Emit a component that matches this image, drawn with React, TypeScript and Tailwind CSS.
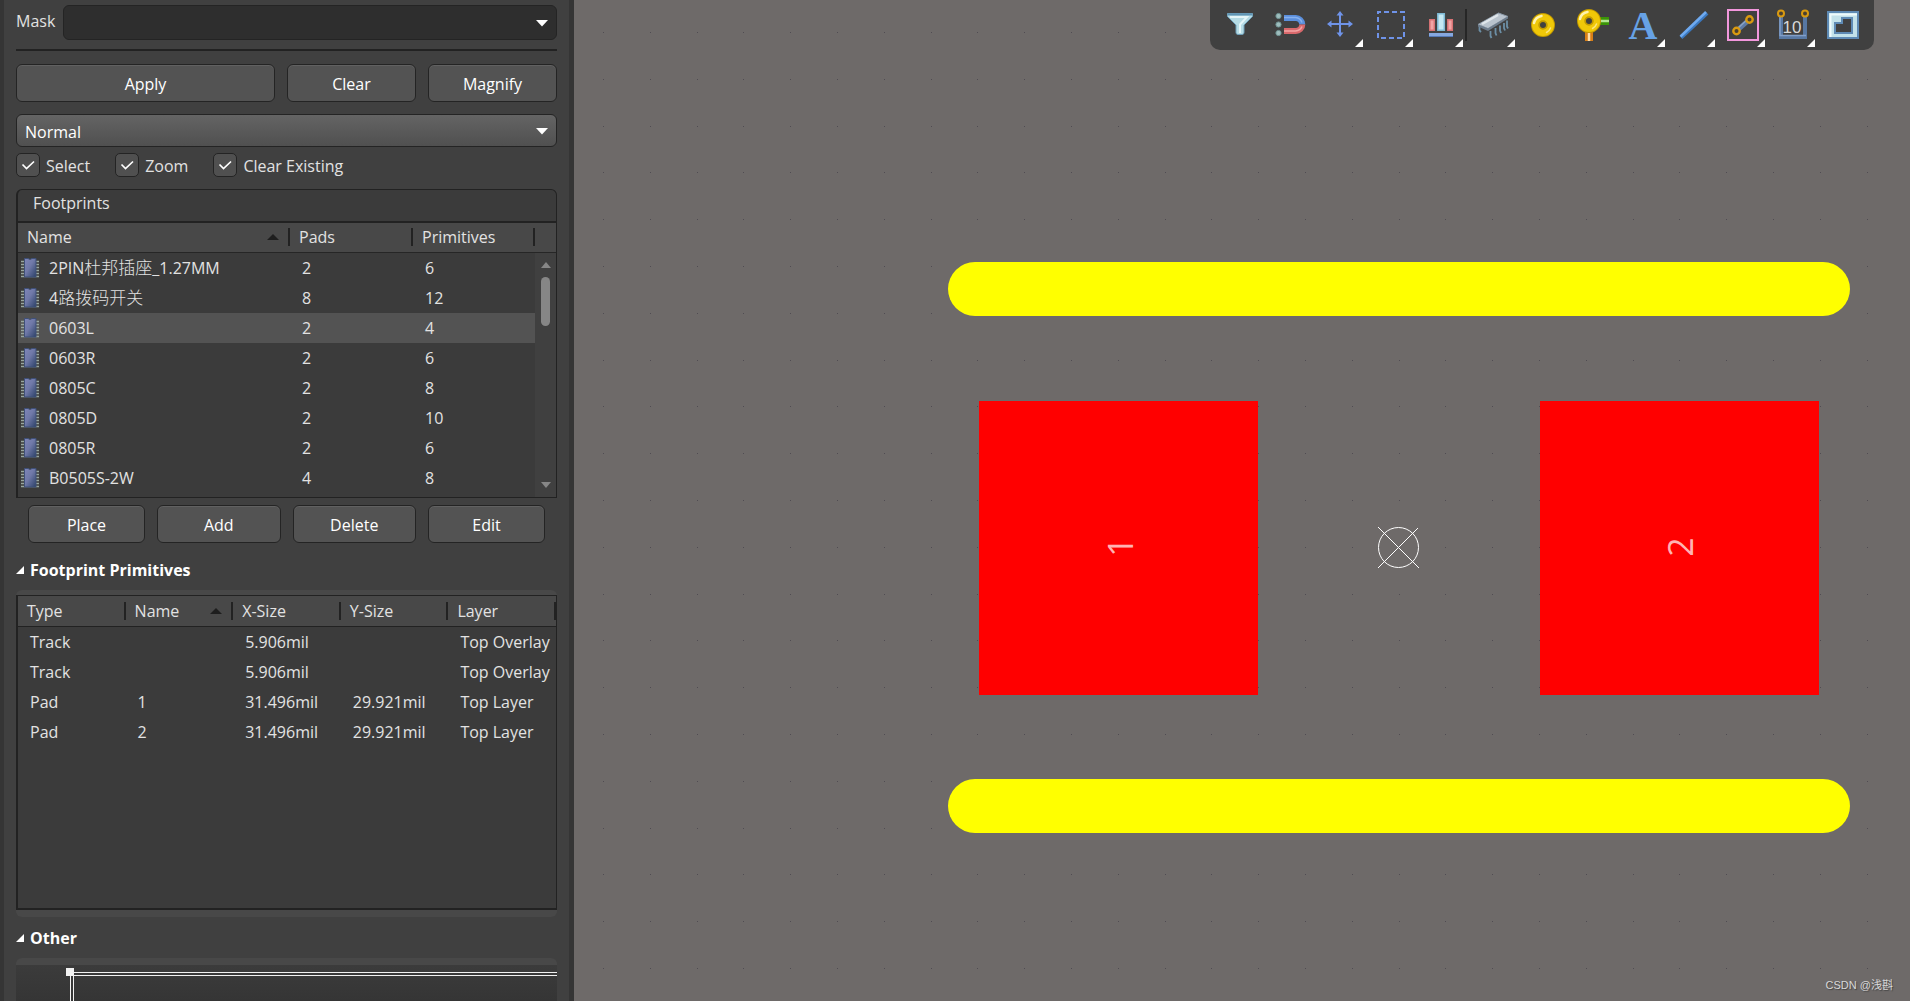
import React from "react";

const footprints = [
  { name: "2PIN杜邦插座_1.27MM", pads: 2, primitives: 6 },
  { name: "4路拨码开关", pads: 8, primitives: 12 },
  { name: "0603L", pads: 2, primitives: 4 },
  { name: "0603R", pads: 2, primitives: 6 },
  { name: "0805C", pads: 2, primitives: 8 },
  { name: "0805D", pads: 2, primitives: 10 },
  { name: "0805R", pads: 2, primitives: 6 },
  { name: "B0505S-2W", pads: 4, primitives: 8 },
];

const primitives = [
  ["Track", "", "5.906mil", "", "Top Overlay"],
  ["Track", "", "5.906mil", "", "Top Overlay"],
  ["Pad", "1", "31.496mil", "29.921mil", "Top Layer"],
  ["Pad", "2", "31.496mil", "29.921mil", "Top Layer"],
];

function PanelButton({ children, className }: { children: React.ReactNode; className: string }) {
  return (
    <button
      type="button"
      className={`h-[38px] rounded-md border border-[#242424] bg-[#535353] pt-px text-center text-white shadow-[inset_0_1px_0_#616161] ${className}`}
    >
      {children}
    </button>
  );
}

function DownArrow() {
  return (
    <svg className="pointer-events-none absolute right-[9px] top-1/2 -mt-[3px]" width="12" height="7" viewBox="0 0 12 7" aria-hidden="true">
      <path d="M0 0h12L6 6.5z" fill="#fff" />
    </svg>
  );
}

function CheckItem({ id, label }: { id: string; label: string }) {
  return (
    <label htmlFor={id} className="flex items-center gap-1.5">
      <span className="relative block size-6">
        <input
          id={id}
          type="checkbox"
          defaultChecked
          className="peer block size-6 appearance-none rounded-[5px] border border-[#242424] bg-[#505050]"
        />
        <svg className="pointer-events-none absolute left-0 top-0 opacity-0 peer-checked:opacity-100" width="24" height="24" viewBox="0 0 24 24" fill="none" aria-hidden="true">
          <path d="M6.5 11.5l4 4 7.5-7" stroke="#fff" strokeWidth="1.7" />
        </svg>
      </span>
      <span className="pt-0.5">{label}</span>
    </label>
  );
}

function HeadCell({ children, sorted }: { children?: React.ReactNode; sorted?: boolean }) {
  return (
    <th className="p-0 text-left font-normal">
      <div className="flex h-[18px] items-center justify-between border-r-2 border-[#222] pl-[9px] pr-[9px]">
        {children}
        {sorted && (
          <svg width="12" height="6" viewBox="0 0 12 6" aria-hidden="true">
            <path d="M0 6h12L6 0z" fill="#1e1e1e" />
          </svg>
        )}
      </div>
    </th>
  );
}

/* Chinese runs are set one pixel larger than the Latin text beside them. */
function FootprintName({ name }: { name: string }) {
  return (
    <span className="leading-[30px]">
      {name.split(/([\u4e00-\u9fff]+)/).map((part, i) =>
        i % 2 === 1 ? (
          <span key={i} className="text-[17px] font-light">{part}</span>
        ) : (
          part
        ),
      )}
    </span>
  );
}

function ChipIcon() {
  return (
    <svg width="18" height="20" viewBox="0 0 18 20" className="block" aria-hidden="true">
      <defs>
        <linearGradient id="chipBody" x1="0" y1="0" x2="1" y2="1">
          <stop offset="0" stopColor="#7f86b8" />
          <stop offset="0.45" stopColor="#7079a8" />
          <stop offset="1" stopColor="#2c4168" />
        </linearGradient>
      </defs>
      <path d="M0 3.5h18M0 6.5h18M0 9.5h18M0 12.5h18M0 15.5h18M0 18.5h18" stroke="#98a69f" strokeWidth="1.4" />
      <path d="M3.5 .5h3.5l2 1 2-1h4v18.5h-11.5z" fill="url(#chipBody)" stroke="#3f5078" strokeWidth="1" />
    </svg>
  );
}

function SectionTitle({ children }: { children: React.ReactNode }) {
  return (
    <h2 className="flex h-6 items-center gap-1.5 font-bold text-white">
      <svg width="8" height="8" viewBox="0 0 8 8" aria-hidden="true">
        <path d="M8 0v8H0z" fill="#fff" />
      </svg>
      {children}
    </h2>
  );
}

function Sidebar() {
  return (
    <aside className="flex w-[574px] shrink-0 flex-col border-l-4 border-r-[5px] border-[#353535] bg-[#404040] pl-3 pr-3 pt-[5px]">
      <div className="flex h-[35px] items-center">
        <label htmlFor="mask" className="w-[47px] pb-1">Mask</label>
        <div className="relative h-[35px] flex-1">
          <select id="mask" className="block size-full appearance-none rounded-md border border-[#242424] bg-[#2e2e2e] px-2">
            <option></option>
          </select>
          <DownArrow />
        </div>
      </div>
      <hr className="mt-[9px] border-t-2 border-[#222]" />

      <div className="mt-[13px] flex gap-3">
        <PanelButton className="flex-[2]">Apply</PanelButton>
        <PanelButton className="w-[129px]">Clear</PanelButton>
        <PanelButton className="w-[129px]">Magnify</PanelButton>
      </div>

      <div className="relative mt-3 h-[33px]">
        <select aria-label="Filter mode" className="block size-full appearance-none rounded-md border border-[#242424] bg-linear-to-b from-[#646464] to-[#505050] px-2 pt-0.5 text-white">
          <option>Normal</option>
        </select>
        <DownArrow />
      </div>

      <div className="mt-1.5 flex h-6 gap-[25px]">
        <CheckItem id="select" label="Select" />
        <CheckItem id="zoom" label="Zoom" />
        <CheckItem id="clear-existing" label="Clear Existing" />
      </div>

      <section className="mt-3 flex h-[309px] flex-col rounded-t-md border border-l-2 border-[#222] bg-[#3b3b3b]">
        <h2 className="h-[31px] pl-[15px] leading-[27px]">Footprints</h2>
        <div className="flex flex-1 border-t-2 border-[#222]">
          <table className="flex-1 table-fixed border-collapse self-start">
            <colgroup>
              <col className="w-[272px]" />
              <col className="w-[123px]" />
              <col />
            </colgroup>
            <thead>
              <tr className="h-[29px] border-b border-[#262626] bg-[#484848]">
                <HeadCell sorted>Name</HeadCell>
                <HeadCell>Pads</HeadCell>
                <HeadCell>Primitives</HeadCell>
              </tr>
            </thead>
            <tbody>
              {footprints.map((f) => (
                <tr key={f.name} className={f.name === "0603L" ? "h-[30px] bg-[#535353]" : "h-[30px]"}>
                  <td className="p-0 pl-[3px]">
                    <div className="flex h-[30px] items-center gap-2.5">
                      <ChipIcon />
                      <FootprintName name={f.name} />
                    </div>
                  </td>
                  <td className="p-0 pl-3">{f.pads}</td>
                  <td className="p-0 pl-3">{f.primitives}</td>
                </tr>
              ))}
            </tbody>
          </table>
          <div className="flex w-[21px] flex-col items-center bg-[#404040]">
            <div className="h-[30px] w-full border-b border-[#262626] bg-[#484848]" />
            <svg className="mt-[9px]" width="10" height="6" viewBox="0 0 10 6" aria-hidden="true">
              <path d="M0 6h10L5 0z" fill="#868686" />
            </svg>
            <div className="mt-[9px] h-[49px] w-[9px] rounded-full bg-[#868686]" />
            <svg className="mb-[9px] mt-auto" width="10" height="6" viewBox="0 0 10 6" aria-hidden="true">
              <path d="M0 0h10L5 6z" fill="#868686" />
            </svg>
          </div>
        </div>
      </section>

      <div className="mt-[7px] flex gap-3 px-3">
        <PanelButton className="w-[117px]">Place</PanelButton>
        <PanelButton className="flex-1">Add</PanelButton>
        <PanelButton className="flex-1">Delete</PanelButton>
        <PanelButton className="w-[117px]">Edit</PanelButton>
      </div>

      <div className="mt-[15px]">
        <SectionTitle>Footprint Primitives</SectionTitle>
      </div>
      <section className="mt-2 rounded-md bg-[#484848] pb-[7px] pt-[5px]">
        <div className="h-[315px] border border-b-2 border-l-2 border-[#222] bg-[#3b3b3b]">
          <table className="w-full table-fixed border-collapse">
            <thead>
              <tr className="h-[30px] border-b border-[#222] bg-[#484848]">
                <HeadCell>Type</HeadCell>
                <HeadCell sorted>Name</HeadCell>
                <HeadCell>X-Size</HeadCell>
                <HeadCell>Y-Size</HeadCell>
                <HeadCell>Layer</HeadCell>
              </tr>
            </thead>
            <tbody>
              {primitives.map((row, i) => (
                <tr key={i} className="h-[30px]">
                  {row.map((cell, j) => (
                    <td key={j} className="whitespace-nowrap p-0 pl-3 pt-0.5">{cell}</td>
                  ))}
                </tr>
              ))}
            </tbody>
          </table>
        </div>
      </section>

      <div className="mt-[9px]">
        <SectionTitle>Other</SectionTitle>
      </div>
      <section className="mt-2 flex min-h-0 flex-1 flex-col overflow-hidden rounded-t-md border-t-[7px] border-[#484848] bg-linear-to-b from-[#3b3b3b] to-[#353535]">
        <svg className="block min-h-0 w-full flex-1" aria-hidden="true">
          <path d="M54 7.5h1000M57 10.5h1000M54.5 7v1000M57.5 10v1000" stroke="#f2f2f2" fill="none" />
          <rect x="50" y="3" width="8" height="8" fill="#f2f2f2" />
        </svg>
      </section>
    </aside>
  );
}

function Tool({ label, menu, children }: { label: string; menu?: boolean; children: React.ReactNode }) {
  return (
    <button type="button" aria-label={label} className="block size-[50px]">
      <svg width="50" height="50" viewBox="0 0 50 50" fill="none" aria-hidden="true">
        {children}
        {menu && <path d="M48 39v8h-8z" fill="#fff" />}
      </svg>
    </button>
  );
}

function Donut({ cx, cy }: { cx: number; cy: number }) {
  return (
    <g>
      <circle cx={cx} cy={cy} r="7.5" stroke="#c29a00" strokeWidth="9" />
      <circle cx={cx} cy={cy} r="7.5" stroke="#f0c808" strokeWidth="7" />
      <circle cx={cx} cy={cy} r="4" stroke="#c29a00" strokeWidth="1.5" />
      <path d={`M${cx - 9} ${cy - 2}a9 9 0 0 1 7.5-7`} stroke="#fff3b0" strokeWidth="2.5" strokeLinecap="round" />
      <path d={`M${cx + 7.5} ${cy + 3}a8 8 0 0 1-4 4.5`} stroke="#fbe680" strokeWidth="1.5" strokeLinecap="round" />
    </g>
  );
}

function Toolbar() {
  return (
    <div role="toolbar" aria-label="Drawing tools" className="absolute right-9 top-0 flex rounded-b-[10px] bg-[#404040] pl-[5px] pr-[7px]">
      <Tool label="Filter">
        <path d="M12.5 13.5h25v3l-8.500 8.500v7.500a2 2 0 0 1-2 2h-4a2 2 0 0 1-2-2v-7.500l-8.500-8.500z" fill="#b5dbe4" stroke="#6f9fb9" />
        <path d="M13 14.500h24" stroke="#5f93b3" strokeWidth="2" />
        <path d="M15 17h17l-7 7.500v8.500" stroke="#e4f5f8" strokeWidth="2" />
      </Tool>
      <Tool label="Snap">
        <g fill="#9dbcbc" stroke="#6f9494">
          <circle cx="13.5" cy="16" r="2.6" />
          <circle cx="13.5" cy="24.5" r="2.6" />
          <circle cx="13.5" cy="33" r="2.6" />
        </g>
        <path d="M19 18h11.500a6.500 6.500 0 0 1 6.800 6.500" stroke="#5b8fdc" strokeWidth="6" />
        <path d="M19 31h11.500a6.500 6.500 0 0 0 6.800-6.500" stroke="#d9696c" strokeWidth="6" />
        <path d="M19 17.500h11.500q5 .5 6.500 5" stroke="#86b1ee" strokeWidth="1.5" />
        <path d="M19 31h11.500q5-.5 6.500-4.500" stroke="#f3a5a5" strokeWidth="1.5" />
      </Tool>
      <Tool label="Move" menu>
        <path d="M25 13v22M14 24h22" stroke="#6f93e8" strokeWidth="2" />
        <path d="M25 11l3.500 4.500h-7zM25 37l3.500-4.500h-7zM12 24l4.500-3.500v7zM38 24l-4.500-3.500v7z" fill="#6f93e8" />
      </Tool>
      <Tool label="Select area" menu>
        <rect x="13" y="12" width="26" height="26" stroke="#6f93e8" strokeWidth="2" strokeDasharray="5 3" strokeDashoffset="2" />
      </Tool>
      <Tool label="Align" menu>
        <g strokeWidth="1.5">
          <path d="M14.800 19.800h4.500v10.500h-4.500zM32.800 19.800h4.500v10.500h-4.500z" fill="#f0a4a4" stroke="#d87274" />
          <path d="M22.800 13.800h6.500v16.500h-6.500z" fill="#c4e8f2" stroke="#7db9d4" />
        </g>
        <path d="M14 33h24v4H14z" fill="#86a8e0" />
        <path d="M14 36.500h24" stroke="#567ab8" />
      </Tool>
      <div className="my-[9px] w-0.5 bg-[#262626]" />
      <Tool label="Component" menu>
        <path d="M12.500 26v4.500l1.500 1.500M23.500 31v5l1 2M28.500 28v5l1 2.500M33 25.500v5l1 2.500M37 23v5l1 2.500M40 20.500v6l1 2" stroke="#6c8fa6" strokeWidth="1.8" />
        <path d="M11 24.500L31.500 13l9.500 3.500-20 12z" fill="#b9c3cd" stroke="#8c9aa8" />
        <path d="M11 24.500v2l10 4.500 20-12.500v-2l-20 12z" fill="#6d7c8c" />
        <path d="M15 24l16-9" stroke="#dfe5ea" strokeWidth="2.5" />
      </Tool>
      <Tool label="Pad">
        <Donut cx={26} cy={25} />
      </Tool>
      <Tool label="Via">
        <path d="M33 17h9v8h-9z" fill="#3a9407" />
        <path d="M33 21h9" stroke="#b5e595" strokeWidth="2.5" />
        <path d="M18 31h8v10h-8z" fill="#d97e16" />
        <path d="M22 31v10" stroke="#ffe0ad" strokeWidth="2.5" />
        <Donut cx={22} cy={21} />
      </Tool>
      <Tool label="Text" menu>
        <text x="26" y="39" textAnchor="middle" fontSize="40" fontWeight="bold" fill="#67a2e6" className="font-['Liberation_Serif',serif]">A</text>
      </Tool>
      <Tool label="Line" menu>
        <path d="M14 37.500L40 13" stroke="#3b79c0" strokeWidth="4" />
        <path d="M13.500 36.500L39 12" stroke="#6faaf0" strokeWidth="2.5" />
      </Tool>
      <Tool label="Track" menu>
        <rect x="11" y="10" width="30" height="30" stroke="#f297dc" strokeWidth="2" />
        <path d="M19.500 31L33 19" stroke="#5d7ba6" strokeWidth="5" />
        <path d="M19 30L32 18" stroke="#8ba3c4" strokeWidth="1.5" />
        <g fill="#4a4030" stroke="#d99a10" strokeWidth="2.4">
          <circle cx="19.5" cy="31" r="3.2" />
          <circle cx="32.5" cy="19.5" r="3.2" />
        </g>
      </Tool>
      <Tool label="Dimension" menu>
        <path d="M14 17v20h24V17" stroke="#5878a3" strokeWidth="4" />
        <path d="M13 17v18.500h26" stroke="#829fc8" strokeWidth="1.5" />
        <g fill="#4a4030" stroke="#d99a10" strokeWidth="2">
          <circle cx="14" cy="13.500" r="3" />
          <circle cx="38" cy="13.500" r="3" />
        </g>
        <text x="25" y="33" textAnchor="middle" fontSize="17" fill="#d8d8d8" className="font-['Liberation_Sans',sans-serif]">10</text>
      </Tool>
      <Tool label="Polygon">
        <rect x="11" y="12" width="30" height="26" fill="#c3e2ea" stroke="#5e8ab4" strokeWidth="2" />
        <path d="M13.500 37V14.500H40" stroke="#eefafc" strokeWidth="2" />
        <path d="M25 18h10v15H18V23h7z" fill="#404040" stroke="#5e8ab4" strokeWidth="2" />
      </Tool>
    </div>
  );
}

const GRID_STEP = 46.8;
const gridDots = Array.from({ length: 60 * 40 }, (_, i) => {
  const x = Math.round(29 + (i % 60) * GRID_STEP);
  const y = Math.round(32 + Math.floor(i / 60) * GRID_STEP);
  return `M${x} ${y}h1v1h-1z`;
}).join("");

function Workspace() {
  return (
    <main className="relative min-w-0 flex-1 overflow-hidden bg-[#6e6a69]">
      <svg className="absolute inset-0 size-full" role="img" aria-label="Footprint 0603L">
        <path d={gridDots} fill="#504c52" />
        <rect x="374" y="262" width="902" height="54" rx="27" fill="#ff0" />
        <rect x="374" y="779" width="902" height="54" rx="27" fill="#ff0" />
        <rect x="405" y="401" width="279" height="294" fill="#f00" />
        <rect x="966" y="401" width="279" height="294" fill="#f00" />
        <g fill="#ffb3b3" fontSize="34" textAnchor="middle" className="font-['Open_Sans',sans-serif]">
          <text transform="translate(559 547) rotate(-90)">1</text>
          <text transform="translate(1119 547) rotate(-90)">2</text>
        </g>
        <g fill="none" stroke="#fff">
          <circle cx="824.5" cy="547.5" r="20" />
          <path d="M804 527l41 41M804 568l40-40" />
        </g>
      </svg>
      <Toolbar />
      <p className="absolute bottom-[7px] right-[17px] text-[11px] leading-[18px] text-[#d8d8d8] font-['Liberation_Sans','Noto_Sans_CJK_SC',sans-serif] [text-shadow:1px_1px_1px_#444]">CSDN @浅斟</p>
    </main>
  );
}

export default function App() {
  return (
    <div className="flex h-screen overflow-hidden bg-[#404040] text-base text-[#e2e2e2] font-['Open_Sans','Noto_Sans_CJK_SC',sans-serif]">
      <Sidebar />
      <Workspace />
    </div>
  );
}
